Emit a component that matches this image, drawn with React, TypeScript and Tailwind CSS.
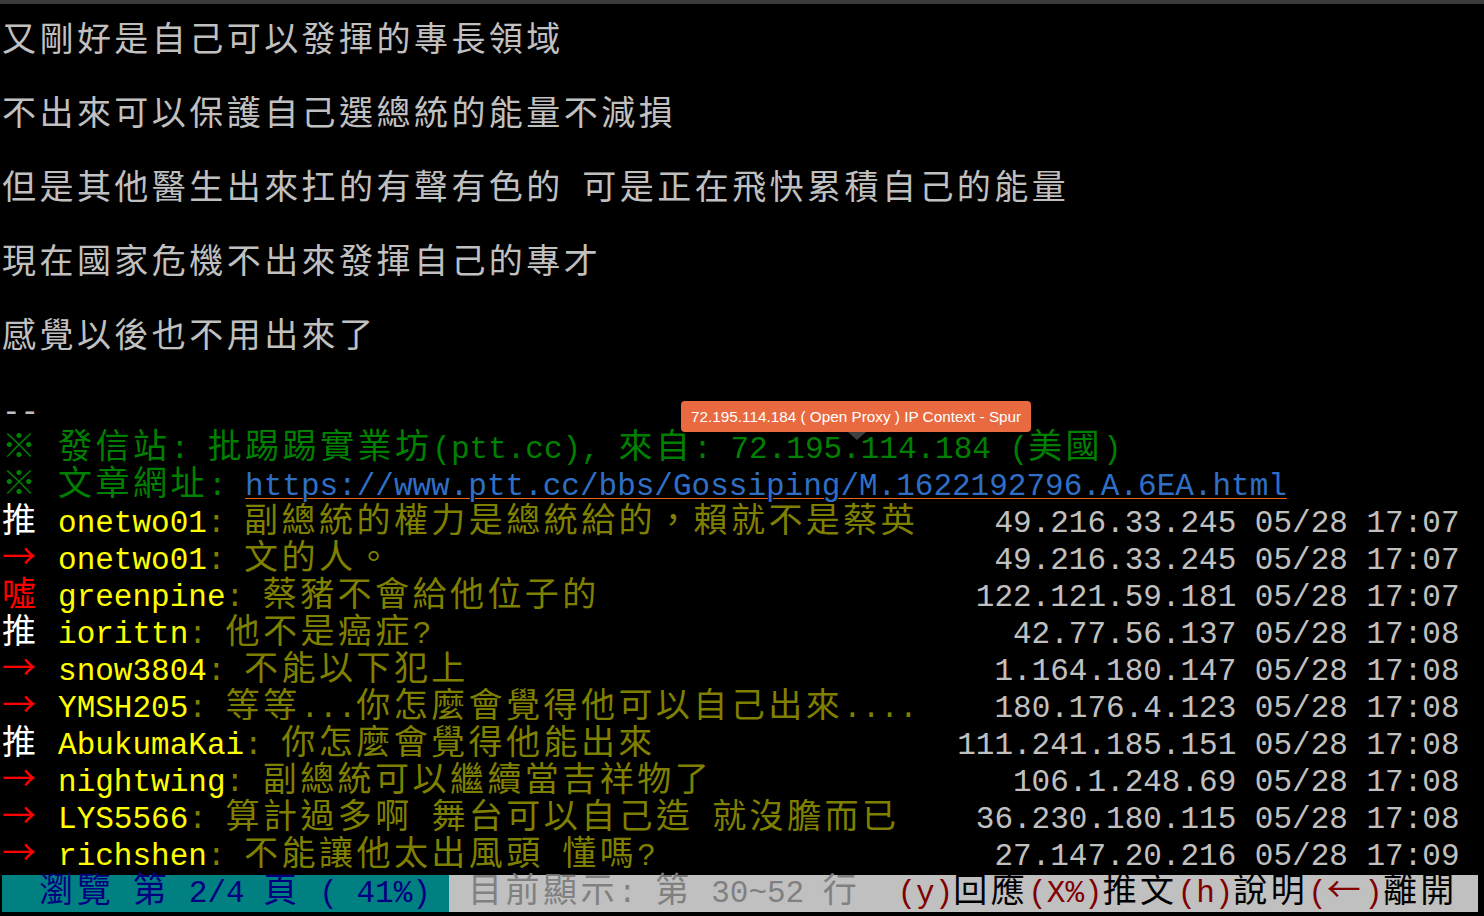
import React from 'react';

// one run of text, split into half-width (mono) and full-width (CJK) pieces
type Seg = { t: string; c: string; u?: boolean };

const ASC = "font-['Liberation_Mono',monospace] text-[31px]";
const CJK = "font-['Noto_Sans_CJK_TC',sans-serif] text-[34px] tracking-[3.45px] leading-[20px]";

function Txt({ t, c, u }: Seg) {
  const runs: { s: string; w: boolean }[] = [];
  for (const ch of t) {
    const w = ch.charCodeAt(0) > 0x2000;
    const last = runs[runs.length - 1];
    if (last && last.w === w) last.s += ch;
    else runs.push({ s: ch, w });
  }
  return (
    <span className={u ? c + ' underline decoration-[#f26418] decoration-1 underline-offset-[3px]' : c}>
      {runs.map((r, i) => (
        <span key={i} className={r.w ? CJK : ASC}>
          {r.s}
        </span>
      ))}
    </span>
  );
}

const GREY = 'text-[#c0c0c0]';
const GREEN = 'text-[#008000]';

function Row({ segs }: { segs: Seg[] }) {
  return (
    <div className="h-[37px] whitespace-pre">
      {segs.map((s, i) => (
        <Txt key={i} {...s} />
      ))}
    </div>
  );
}

const body = [
  '又剛好是自己可以發揮的專長領域',
  '',
  '不出來可以保護自己選總統的能量不減損',
  '',
  '但是其他醫生出來扛的有聲有色的 可是正在飛快累積自己的能量',
  '',
  '現在國家危機不出來發揮自己的專才',
  '',
  '感覺以後也不用出來了',
  '',
  '--',
];

const comments = [
  { tag: '推', tc: 'text-white', user: 'onetwo01', msg: '副總統的權力是總統給的，賴就不是蔡英', ip: '49.216.33.245 05/28 17:07' },
  { tag: '→', tc: 'text-[#ff0000]', user: 'onetwo01', msg: '文的人。', ip: '49.216.33.245 05/28 17:07' },
  { tag: '噓', tc: 'text-[#ff0000]', user: 'greenpine', msg: '蔡豬不會給他位子的', ip: '122.121.59.181 05/28 17:07' },
  { tag: '推', tc: 'text-white', user: 'iorittn', msg: '他不是癌症?', ip: '42.77.56.137 05/28 17:08' },
  { tag: '→', tc: 'text-[#ff0000]', user: 'snow3804', msg: '不能以下犯上', ip: '1.164.180.147 05/28 17:08' },
  { tag: '→', tc: 'text-[#ff0000]', user: 'YMSH205', msg: '等等...你怎麼會覺得他可以自己出來....', ip: '180.176.4.123 05/28 17:08' },
  { tag: '推', tc: 'text-white', user: 'AbukumaKai', msg: '你怎麼會覺得他能出來', ip: '111.241.185.151 05/28 17:08' },
  { tag: '→', tc: 'text-[#ff0000]', user: 'nightwing', msg: '副總統可以繼續當吉祥物了', ip: '106.1.248.69 05/28 17:08' },
  { tag: '→', tc: 'text-[#ff0000]', user: 'LYS5566', msg: '算計過多啊 舞台可以自己造 就沒膽而已', ip: '36.230.180.115 05/28 17:08' },
  { tag: '→', tc: 'text-[#ff0000]', user: 'richshen', msg: '不能讓他太出風頭 懂嗎?', ip: '27.147.20.216 05/28 17:09' },
];

export default function App() {
  return (
    <div className="relative h-[916px] w-[1484px] overflow-hidden bg-black">
      <div className="h-[4px] bg-[#3b3b3b]" />

      <div className="w-[1478px] pt-[20px] pl-[2px] leading-[37px] font-['Liberation_Mono',monospace] text-[31px]">
        {body.map((line, i) => (
          <Row key={i} segs={[{ t: line, c: GREY }]} />
        ))}

        <Row segs={[{ t: '※ 發信站: 批踢踢實業坊(ptt.cc), 來自: 72.195.114.184 (美國)', c: GREEN }]} />
        <Row
          segs={[
            { t: '※ 文章網址: ', c: GREEN },
            { t: 'https://www.ptt.cc/bbs/Gossiping/M.1622192796.A.6EA.html', c: 'text-[#2f6fc6]', u: true },
          ]}
        />

        {comments.map((m, i) => (
          <div key={i} className="flex h-[37px] items-start justify-between whitespace-pre pr-[18.5px]">
            <div>
              <Txt t={m.tag + ' '} c={m.tc} />
              <Txt t={m.user} c="text-[#ffff00]" />
              <Txt t={': ' + m.msg} c="text-[#808000]" />
            </div>
            <div>
              <Txt t={m.ip} c={GREY} />
            </div>
          </div>
        ))}

        <div className="flex h-[37px] whitespace-pre">
          <div className="bg-[#008080]">
            <Txt t="  瀏覽 第 2/4 頁 ( 41%) " c="text-[#000080]" />
          </div>
          <div className="flex-1 bg-[#c0c0c0]">
            <Txt t=" 目前顯示: 第 30~52 行  " c="text-[#808080]" />
            <Txt t="(y)" c="text-[#800000]" />
            <Txt t="回應" c="text-black" />
            <Txt t="(X%)" c="text-[#800000]" />
            <Txt t="推文" c="text-black" />
            <Txt t="(h)" c="text-[#800000]" />
            <Txt t="說明" c="text-black" />
            <Txt t="(←)" c="text-[#800000]" />
            <Txt t="離開" c="text-black" />
          </div>
        </div>
      </div>

      {/* spur ip-context tooltip */}
      <div className="absolute left-[681px] top-[401px] flex h-[31px] items-center rounded-[4px] bg-[#e96a41] px-[10px] font-['Liberation_Sans',sans-serif] text-[15.3px] leading-none text-white">
        72.195.114.184 ( Open Proxy ) IP Context - Spur
      </div>
      <div className="absolute left-[848px] top-[432px] h-0 w-0 border-x-[9px] border-t-[8px] border-x-transparent border-t-[#404040]" />
    </div>
  );
}
